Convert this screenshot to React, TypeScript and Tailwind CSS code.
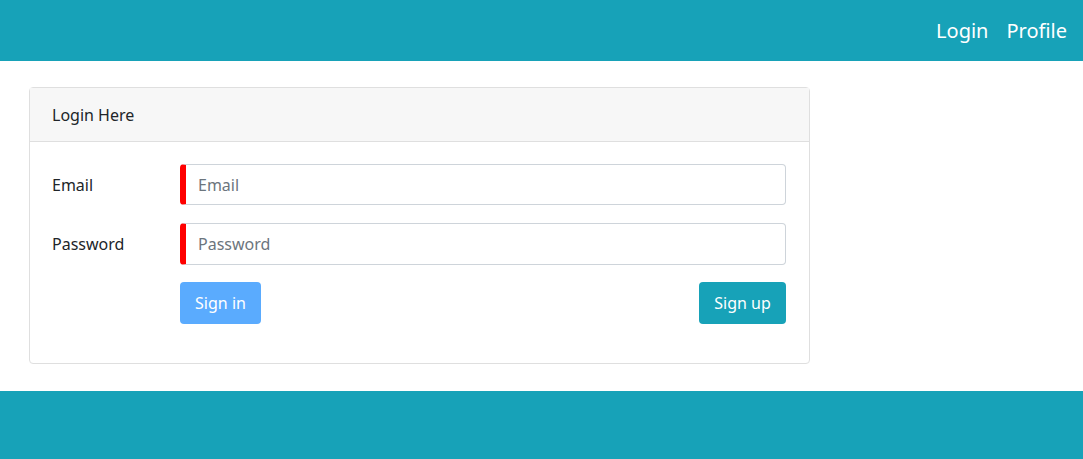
export default function App() {
    return (
        <div className="flex min-h-[459px] flex-col bg-white font-['Noto_Sans',sans-serif] text-[#212529]">
            <nav className="flex h-[61px] items-center justify-end gap-[18px] bg-[#17a2b8] pr-[16px]">
                <a href="#" className="text-[20px] text-white">Login</a>
                <a href="#" className="text-[20px] text-white">Profile</a>
            </nav>

            <main className="flex-1 pb-[27px] pl-[29px] pt-[26px]">
                <div className="w-[781px] rounded-[4px] border border-[#dfdfdf]">
                    <div className="flex h-[54px] items-center border-b border-[#dfdfdf] bg-[#f7f7f7] px-[22px] text-[16px]">
                        Login Here
                    </div>
                    <form className="flex flex-col px-[22px] pb-[39px] pt-[22px] pr-[23px]">
                        <div className="flex items-center">
                            <label className="w-[128px] text-[16px]">Email</label>
                            <input
                                type="email"
                                placeholder="Email"
                                className="h-[41px] flex-1 rounded-[4px] border border-l-[6px] border-[#ced4da] border-l-[#ff0000] px-[12px] text-[16px] outline-none placeholder:text-[#6c757d]"
                            />
                        </div>
                        <div className="mt-[18px] flex items-center">
                            <label className="w-[128px] text-[16px]">Password</label>
                            <input
                                type="password"
                                placeholder="Password"
                                className="h-[42px] flex-1 rounded-[4px] border border-l-[6px] border-[#ced4da] border-l-[#ff0000] px-[12px] text-[16px] outline-none placeholder:text-[#6c757d]"
                            />
                        </div>
                        <div className="mt-[17px] flex items-center justify-between pl-[128px]">
                            <button type="button" className="h-[42px] w-[81px] rounded-[4px] bg-[#5aabfe] text-[16px] text-white">
                                Sign in
                            </button>
                            <button type="button" className="h-[42px] w-[87px] rounded-[4px] bg-[#17a2b8] text-[16px] text-white">
                                Sign up
                            </button>
                        </div>
                    </form>
                </div>
            </main>

            <footer className="h-[68px] bg-[#17a2b8]" />
        </div>
    )
}
